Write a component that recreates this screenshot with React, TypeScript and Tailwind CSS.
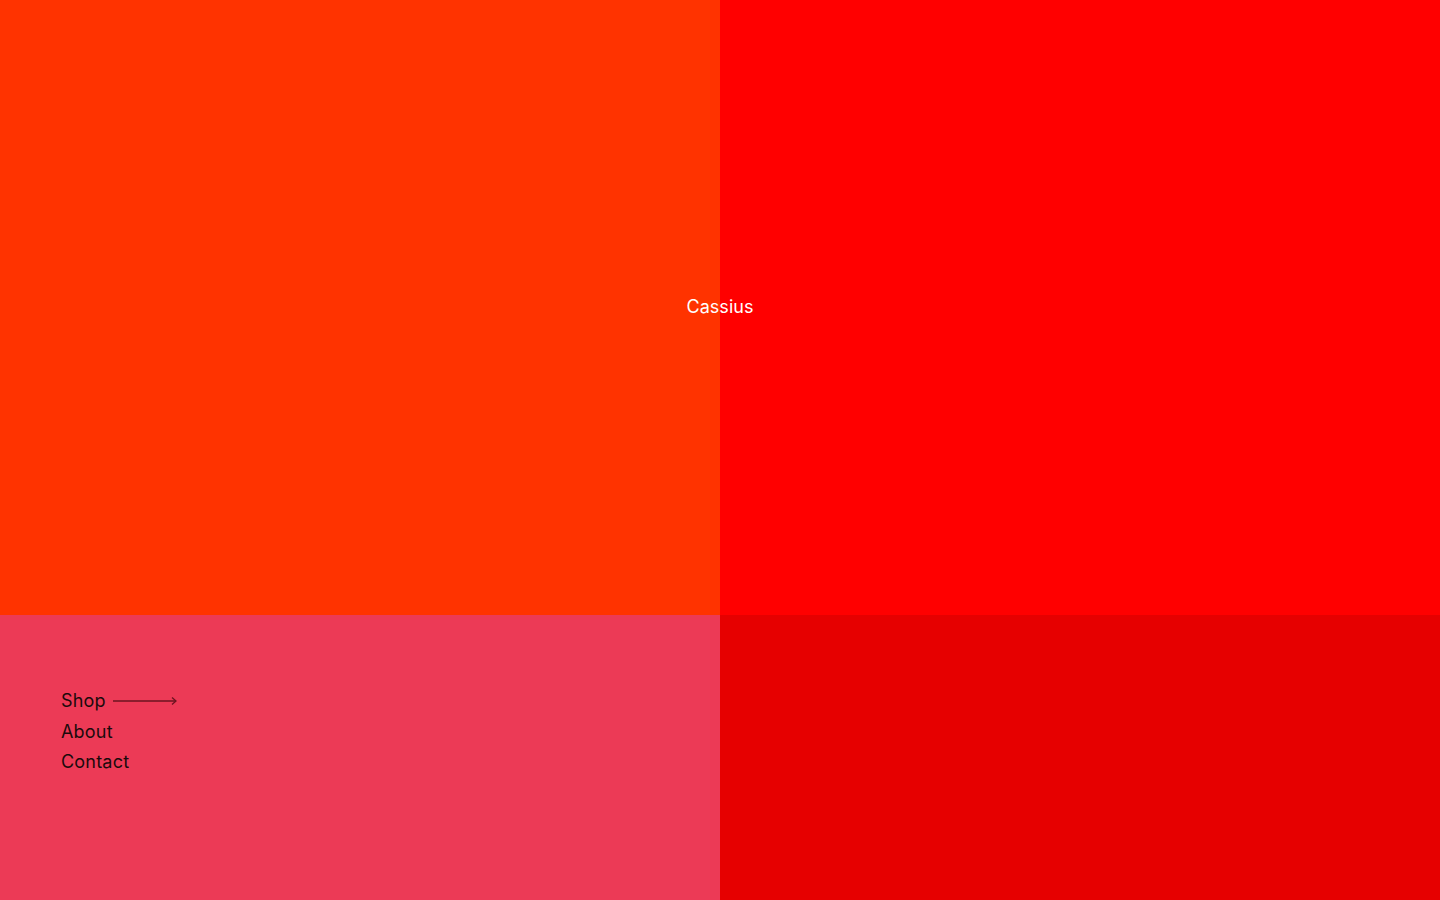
export default function App() {
  return (
    <div className="h-[900px] w-[1440px] overflow-hidden font-['Inter',sans-serif]">
      <div className="relative grid h-[615px] grid-cols-2">
        <div className="bg-[#ff3300]" />
        <div className="bg-[#ff0000]" />
        {/* brand over the seam */}
        <div className="absolute left-1/2 top-[296px] -translate-x-1/2 text-[18px] leading-[22px] text-white">
          Cassius
        </div>
      </div>
      <div className="grid h-[285px] grid-cols-2">
        <div className="bg-[#ec3a56] pl-[61px] pt-[71px]">
          <nav className="flex flex-col text-[18px] leading-[30.5px] tracking-[0.2px] text-[#1a0a0c]">
            <a className="flex items-center gap-[7px]">
              Shop
              <svg width="65" height="10" viewBox="0 0 65 10" fill="none" stroke="#6b1420" strokeWidth="1.3">
                <path d="M0 5h63" />
                <path d="M59 1.5l4 3.5-4 3.5" />
              </svg>
            </a>
            <a>About</a>
            <a>Contact</a>
          </nav>
        </div>
        <div className="bg-[#e60000]" />
      </div>
    </div>
  );
}
